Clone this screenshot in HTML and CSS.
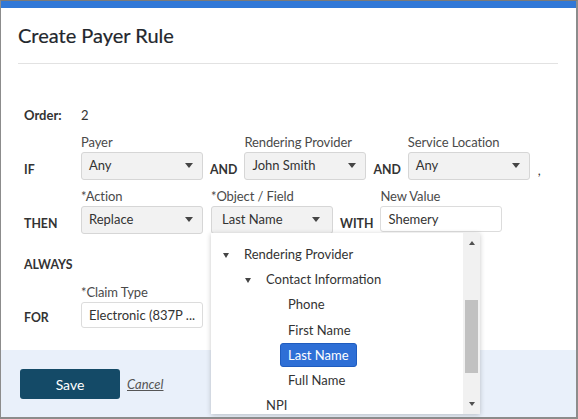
FILE: index.html
```html
<!DOCTYPE html>
<html lang="en">
<head>
  <meta charset="UTF-8" />
  <meta name="viewport" content="width=device-width, initial-scale=1" />
  <title>Create Payer Rule</title>
  <link rel="stylesheet" href="styles.css">
</head>
<body>

  <div class="frame">
    <div class="topbar"></div>

    <div class="modal">
      <div class="modal-header">
        <h2>Create Payer Rule</h2>
      </div>

      <div class="modal-body">
        <div class="order-row">
          <span class="kw">Order:</span>
          <span>2</span>
        </div>

        <!-- IF -->
        <div class="rule-row if-row">
          <span class="kw">IF</span>
          <div class="field">
            <label>Payer</label>
            <div class="select">Any<i class="caret"></i></div>
          </div>
          <span class="join">AND</span>
          <div class="field">
            <label>Rendering Provider</label>
            <div class="select">John Smith<i class="caret"></i></div>
          </div>
          <span class="join">AND</span>
          <div class="field">
            <label>Service Location</label>
            <div class="select">Any<i class="caret"></i></div>
          </div>
          <span class="comma">,</span>
        </div>

        <!-- THEN -->
        <div class="rule-row then-row">
          <span class="kw">THEN</span>
          <div class="field">
            <label>*Action</label>
            <div class="select">Replace<i class="caret"></i></div>
          </div>
          <div class="field field-open">
            <label>*Object / Field</label>
            <div class="select select-wide">Last Name<i class="caret"></i></div>

            <!-- Выпадающее дерево -->
            <div class="dropdown">
              <ul class="tree">
                <li class="tree-item lvl0"><i class="tree-caret"></i><span>Rendering Provider</span></li>
                <li class="tree-item lvl1"><i class="tree-caret"></i><span>Contact Information</span></li>
                <li class="tree-item lvl2"><span>Phone</span></li>
                <li class="tree-item lvl2"><span>First Name</span></li>
                <li class="tree-item lvl2"><span class="selected">Last Name</span></li>
                <li class="tree-item lvl2"><span>Full Name</span></li>
                <li class="tree-item lvl1 no-caret"><span>NPI</span></li>
              </ul>
              <div class="scrollbar">
                <div class="sb-btn"><i class="sb-up"></i></div>
                <div class="sb-track"><div class="sb-thumb"></div></div>
                <div class="sb-btn"><i class="sb-down"></i></div>
              </div>
            </div>
          </div>
          <span class="join">WITH</span>
          <div class="field field-top">
            <label>New Value</label>
            <div class="input">Shemery</div>
          </div>
        </div>

        <!-- ALWAYS -->
        <div class="always-row">
          <span class="kw">ALWAYS</span>
        </div>

        <!-- FOR -->
        <div class="rule-row for-row">
          <span class="kw">FOR</span>
          <div class="field">
            <label>*Claim Type</label>
            <div class="input">Electronic (837P ...</div>
          </div>
        </div>
      </div>

      <div class="modal-footer">
        <button class="btn-save">Save</button>
        <a href="#" class="cancel">Cancel</a>
      </div>
    </div>
  </div>

</body>
</html>
```

FILE: styles.css
```css
/* --- Base --- */
* {
  margin: 0;
  padding: 0;
  box-sizing: border-box;
}
body {
  font-family: 'Lato', 'Open Sans', sans-serif;
  font-size: 13px;
  color: #333;
  background: #fff;
}

/* --- Frame around the modal --- */
.frame {
  width: 578px;
  height: 419px;
  border-top: 1px solid #7a7a7a;
  border-left: 1px solid #8c8c8c;
  border-right: 2px solid #8c8c8c;
  border-bottom: 2px solid #8c8c8c;
  display: flex;
  flex-direction: column;
  overflow: hidden;
}
.topbar {
  height: 7px;
  background: #3178d7;
  flex: none;
}
.modal {
  flex: 1;
  display: flex;
  flex-direction: column;
  position: relative;
}

/* --- Header --- */
.modal-header {
  margin: 0 18px 0 17px;
  padding: 15px 0 16px;
  border-bottom: 1px solid #e2e2e2;
}
.modal-header h2 {
  font-size: 20px;
  line-height: 24px;
  font-weight: 400;
  color: #23272d;
  -webkit-text-stroke: 0.2px #23272d;
}

/* --- Body --- */
.modal-body {
  flex: 1;
  padding: 41px 0 0 23px;
}
.kw {
  width: 49px;
  flex: none;
  font-weight: 700;
  font-size: 12.3px;
  line-height: 20px;
  color: #333;
}
.order-row {
  display: flex;
  gap: 8px;
  line-height: 20px;
}
.order-row .kw {
  font-size: 13px;
}
.rule-row {
  display: flex;
  align-items: flex-end;
  gap: 8px;
}
.if-row { margin-top: 9px; }
.then-row { margin-top: 8px; }
.always-row { margin-top: 21px; display: flex; }
.for-row { margin-top: 9px; }

.join {
  font-weight: 700;
  font-size: 12.3px;
  line-height: 20px;
  color: #333;
  margin: 0 -1px;
}
.comma {
  line-height: 20px;
}

/* --- Fields --- */
.field {
  width: 122px;
  flex: none;
  display: flex;
  flex-direction: column;
}
.field-top {
  align-self: flex-start;
}
.field label {
  line-height: 16px;
  margin-bottom: 2px;
  color: #4a4a4a;
  white-space: nowrap;
  letter-spacing: -0.1px;
}
.select {
  height: 28px;
  border: 1px solid #d6d6d6;
  border-radius: 3px;
  background: #f2f2f2;
  padding: 0 9px 2px 7px;
  line-height: 24px;
  display: flex;
  align-items: center;
  justify-content: space-between;
  color: #333;
}
.select-wide {
  padding: 0 12px 2px 10px;
}
.caret {
  width: 0;
  height: 0;
  border-left: 4px solid transparent;
  border-right: 4px solid transparent;
  border-top: 5px solid #454545;
}
.input {
  height: 26px;
  border: 1px solid #dcdcdc;
  border-radius: 3px;
  background: #fff;
  padding: 0 7px;
  line-height: 24px;
  white-space: nowrap;
  overflow: hidden;
  color: #333;
}

/* --- Dropdown tree --- */
.field-open {
  position: relative;
}
.dropdown {
  position: absolute;
  top: calc(100% - 1px);
  left: 0;
  width: 269px;
  height: 181px;
  background: #fff;
  box-shadow: 0 1px 5px rgba(0, 0, 0, 0.22);
  display: flex;
  z-index: 10;
}
.tree {
  flex: 1;
  list-style: none;
  padding-top: 8px;
}
.tree-item {
  height: 25.3px;
  display: flex;
  align-items: center;
  white-space: nowrap;
  color: #333;
}
.tree-item span {
  line-height: 20px;
}
.lvl0 { padding-left: 12px; }
.lvl1 { padding-left: 34px; }
.lvl1.no-caret { padding-left: 55px; }
.lvl2 { padding-left: 69px; }
.lvl2 span {
  padding: 0 7px;
  border: 1px solid transparent;
}
.tree-caret {
  width: 21px;
  flex: none;
  height: 5px;
  margin-top: 3px;
  position: relative;
}
.tree-caret::before {
  content: '';
  position: absolute;
  left: 0;
  top: 0;
  border-left: 3.5px solid transparent;
  border-right: 3.5px solid transparent;
  border-top: 5px solid #444;
}
.tree-item span.selected {
  background: #2e6fd6;
  border-color: #1f5cbf;
  border-radius: 3px;
  color: #fff;
  line-height: 22px;
}

/* --- Scrollbar --- */
.scrollbar {
  width: 17px;
  flex: none;
  background: #f1f1f1;
  display: flex;
  flex-direction: column;
}
.sb-btn {
  height: 20px;
  display: flex;
  align-items: center;
  justify-content: center;
}
.sb-up, .sb-down {
  width: 0;
  height: 0;
  border-left: 3.5px solid transparent;
  border-right: 3.5px solid transparent;
}
.sb-up { border-bottom: 4px solid #505050; }
.sb-down { border-top: 4px solid #505050; }
.sb-track {
  flex: 1;
}
.sb-thumb {
  margin: 47px 2px 0;
  height: 73px;
  background: #c1c1c1;
}

/* --- Footer --- */
.modal-footer {
  height: 67px;
  flex: none;
  background: #e9f0fa;
  padding: 19px 0 0 19px;
  display: flex;
  align-items: flex-start;
}
.btn-save {
  width: 100px;
  height: 30px;
  border: none;
  border-radius: 3px;
  background: #144a67;
  color: #fff;
  font-family: inherit;
  font-size: 14px;
}
.cancel {
  margin-left: 7px;
  line-height: 30px;
  font-style: italic;
  color: #555;
  text-decoration: underline;
}
```
